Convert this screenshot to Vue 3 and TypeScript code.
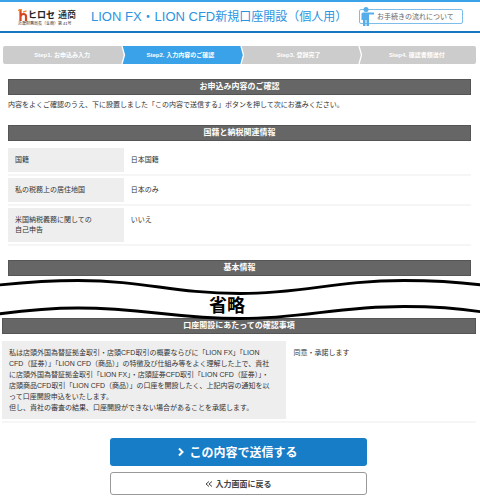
<script setup lang="ts">
interface Row {
  label: string[]
  value: string
}

const steps: string[] = ['Step1. お申込み入力', 'Step2. 入力内容のご確認', 'Step3. 登録完了', 'Step4. 確認書類送付']
const currentStep = 1

const rows: Row[] = [
  { label: ['国籍'], value: '日本国籍' },
  { label: ['私の税務上の居住地国'], value: '日本のみ' },
  { label: ['米国納税義務に関しての', '自己申告'], value: 'いいえ' },
]

const consent: string[] = [
  '私は店頭外国為替証拠金取引・店頭CFD取引の概要ならびに「LION FX」「LION',
  'CFD（証券）」「LION CFD（商品）」の特徴及び仕組み等をよく理解した上で、貴社',
  'に店頭外国為替証拠金取引「LION FX」・店頭証券CFD取引「LION CFD（証券）」・',
  '店頭商品CFD取引「LION CFD（商品）」の口座を開設したく、上記内容の通知を以',
  'って口座開設申込をいたします。',
  '但し、貴社の審査の結果、口座開設ができない場合があることを承諾します。',
]
</script>

<template>
  <div class="page">
    <header class="header">
      <div class="brand">
        <div class="brand-name">
          <svg class="mark" viewBox="0 0 10 12" aria-hidden="true">
            <path d="M2.500 0V12M2.500 7.500Q3 5 5.500 5Q8 5 8 7.500V12" fill="none" stroke="#d9431c" stroke-width="2.200" />
            <path d="M0 1.500L3 0.500M5 3.200L8.500 1.800" fill="none" stroke="#f08a2c" stroke-width="1.400" />
          </svg>
          <span class="kana">ヒロセ</span><span class="kanji">通商</span>
        </div>
        <div class="license">近畿財務局長（金商）第 41号</div>
      </div>
      <h1 class="title"><span class="latin">LION FX・LION CFD</span>新規口座開設（個人用）</h1>
      <a class="guide" href="#flow">
        <svg class="person" viewBox="0 0 14 19" aria-hidden="true">
          <rect x="0" y="4" width="13" height="3" fill="#fff" />
          <circle cx="6" cy="2.500" r="2.500" />
          <path d="M3 5.500H14V7.500H9V19H6.500V13H5.500V19H3V13H1.500V7Q1.500 5.500 3 5.500Z" />
        </svg>
        <span>お手続きの流れについて</span>
      </a>
    </header>

    <ol class="steps">
      <li v-for="(step, i) in steps" :key="step" :class="{ current: i === currentStep }">
        <span>{{ step }}</span>
        <svg v-if="i < steps.length - 1" class="arrow" viewBox="0 0 6 18" preserveAspectRatio="none" aria-hidden="true">
          <path class="tip" d="M0 0H1L3.500 9L1 18H0Z" />
          <path d="M1 0L3.500 9L1 18" fill="none" stroke="#fff" stroke-width="1.300" />
        </svg>
      </li>
    </ol>

    <main>
      <section class="upper">
        <h2>お申込み内容のご確認</h2>
        <p class="note">内容をよくご確認のうえ、下に設置しました「この内容で送信する」ボタンを押して次にお進みください。</p>
        <h2>国籍と納税関連情報</h2>
        <dl class="rows">
          <div v-for="row in rows" :key="row.value" class="row">
            <dt><span v-for="line in row.label" :key="line" class="line">{{ line }}</span></dt>
            <dd>{{ row.value }}</dd>
          </div>
        </dl>
        <h2>基本情報</h2>
      </section>

      <div class="omission">
        <svg viewBox="0 0 480 44" preserveAspectRatio="none" aria-hidden="true">
          <path d="M-2 7C28 4 52 2.500 78 2.500C146 2.500 172 15.500 240 15.500C306 15.500 334 2.500 404 2.500C432 2.500 458 4 482 7V34C458 30 432 28.500 404 28.500C334 28.500 306 40.500 240 40.500C172 40.500 146 30 78 30C52 30 28 32 -2 36Z" fill="#fff" />
          <path d="M-2 7C28 4 52 2.500 78 2.500C146 2.500 172 15.500 240 15.500C306 15.500 334 2.500 404 2.500C432 2.500 458 4 482 7M-2 36C28 32 52 30 78 30C146 30 172 40.500 240 40.500C306 40.500 334 28.500 404 28.500C432 28.500 458 30 482 34" fill="none" stroke="#000" stroke-width="2.800" />
        </svg>
        <strong>省略</strong>
      </div>

      <section class="lower">
        <h2>口座開設にあたっての確認事項</h2>
        <dl class="rows">
          <div class="row">
            <dt><span v-for="line in consent" :key="line" class="line">{{ line }}</span></dt>
            <dd>同意・承諾します</dd>
          </div>
        </dl>
      </section>

      <div class="actions">
        <button class="submit" type="button">
          <svg viewBox="0 0 6 10" aria-hidden="true"><path d="M1 1.500L4.500 5L1 8.500" /></svg>
          <span>この内容で送信する</span>
        </button>
        <button class="back" type="button">
          <svg viewBox="0 0 8 6" aria-hidden="true"><path d="M4 0.500L1 3L4 5.500M7 0.500L4 3L7 5.500" /></svg>
          <span>入力画面に戻る</span>
        </button>
      </div>
    </main>
  </div>
</template>

<style>
body {
  margin: 0;
  background: #fff;
}
</style>

<style scoped>
.page {
  font-family: "Liberation Sans", "Noto Sans CJK JP", sans-serif;
  font-size: 7px;
  line-height: 10px;
  color: #333;
}
h1, h2, p, dl, dd, ol {
  margin: 0;
  padding: 0;
}
.header {
  box-sizing: border-box;
  height: 33px;
  border-top: 2px solid #3aa2e8;
  border-bottom: 2px solid #1878bf;
  padding: 0 17px 0 18px;
  display: flex;
  align-items: center;
  white-space: nowrap;
}
.brand {
  width: 73px;
  padding-top: 3px;
}
.brand-name {
  display: flex;
  align-items: center;
  height: 12px;
  color: #222;
}
.mark {
  width: 10px;
  height: 12px;
}
.kana {
  font-size: 9px;
  font-weight: 700;
}
.kanji {
  font-size: 9px;
  font-weight: 500;
  margin-left: 3px;
}
.license {
  font-size: 4px;
  line-height: 6px;
}
.title {
  font-size: 12px;
  line-height: 20px;
  font-weight: 400;
  color: #2b94e0;
}
.latin {
  font-size: 13px;
}
.guide {
  box-sizing: border-box;
  width: 104px;
  height: 15px;
  margin-left: auto;
  border: 1px solid #7cbdec;
  border-radius: 2px;
  display: flex;
  align-items: center;
  gap: 3px;
  color: #666;
  font-size: 7px;
  text-decoration: none;
}
.person {
  width: 14px;
  height: 19px;
  flex: none;
  fill: #55aeea;
}
.steps {
  display: flex;
  margin: 13px 4px 0 3px;
  list-style: none;
  border-radius: 2px;
  overflow: hidden;
}
.steps li {
  position: relative;
  flex: 1;
  height: 18px;
  display: flex;
  align-items: center;
  justify-content: center;
  background: #ccc;
  color: #fff;
  font-size: 6px;
  font-weight: 700;
}
.steps .current {
  background: #3aa2e8;
}
.arrow {
  position: absolute;
  z-index: 1;
  left: 100%;
  top: 0;
  width: 6px;
  height: 18px;
}
.tip {
  fill: #ccc;
}
.current .tip {
  fill: #3aa2e8;
}
h2 {
  box-sizing: border-box;
  height: 16px;
  border: 1px solid #555;
  background: #666;
  color: #fff;
  font-size: 8px;
  line-height: 14px;
  text-align: center;
}
.upper {
  padding: 15px 9px 0 8px;
}
.note {
  padding: 5px 0 15px;
}
.upper .rows {
  padding: 7px 0 14px;
}
.row {
  display: flex;
  border-bottom: 2px solid #f6f6f6;
  padding-bottom: 2px;
}
.row + .row {
  margin-top: 2px;
}
dt {
  box-sizing: border-box;
  width: 25%;
  padding: 7px;
  background: #eee;
}
dd {
  padding: 7px;
}
.line {
  display: block;
  white-space: nowrap;
}
.omission {
  position: relative;
  z-index: 1;
  height: 44px;
  margin: 2px 0 -4px;
  display: flex;
  align-items: center;
  justify-content: center;
}
.omission svg {
  position: absolute;
  inset: 0;
  width: 100%;
  height: 100%;
}
.omission strong {
  position: relative;
  font-size: 18px;
  line-height: 20px;
  color: #000;
  padding: 12px 26px 0 0;
}
.lower {
  padding: 0 4px 0 2px;
}
.lower .rows {
  padding-top: 7px;
}
.lower dt {
  width: 60%;
  padding: 6px 7px;
  line-height: 11px;
}
.lower dd {
  line-height: 11px;
  padding-top: 6px;
}
.actions {
  display: grid;
  grid-template-columns: 257px;
  justify-content: center;
  gap: 6px;
  padding: 15px 4px 0 0;
}
.actions button {
  display: flex;
  align-items: center;
  justify-content: center;
  gap: 5px;
  margin: 0;
  padding: 0;
  border-radius: 3px;
  font-family: inherit;
  font-weight: 700;
}
.actions svg {
  fill: none;
  stroke: currentColor;
}
.actions .submit {
  height: 28px;
  border: 0;
  background: #177dc7;
  color: #fff;
  font-size: 12px;
}
.submit svg {
  width: 6px;
  height: 10px;
  stroke-width: 2;
}
.submit span {
  padding-bottom: 1px;
}
.actions .back {
  height: 23px;
  border: 1px solid #999;
  background: #fff;
  color: #444;
  font-size: 8px;
  gap: 3px;
}
.back svg {
  width: 8px;
  height: 6px;
}
</style>
